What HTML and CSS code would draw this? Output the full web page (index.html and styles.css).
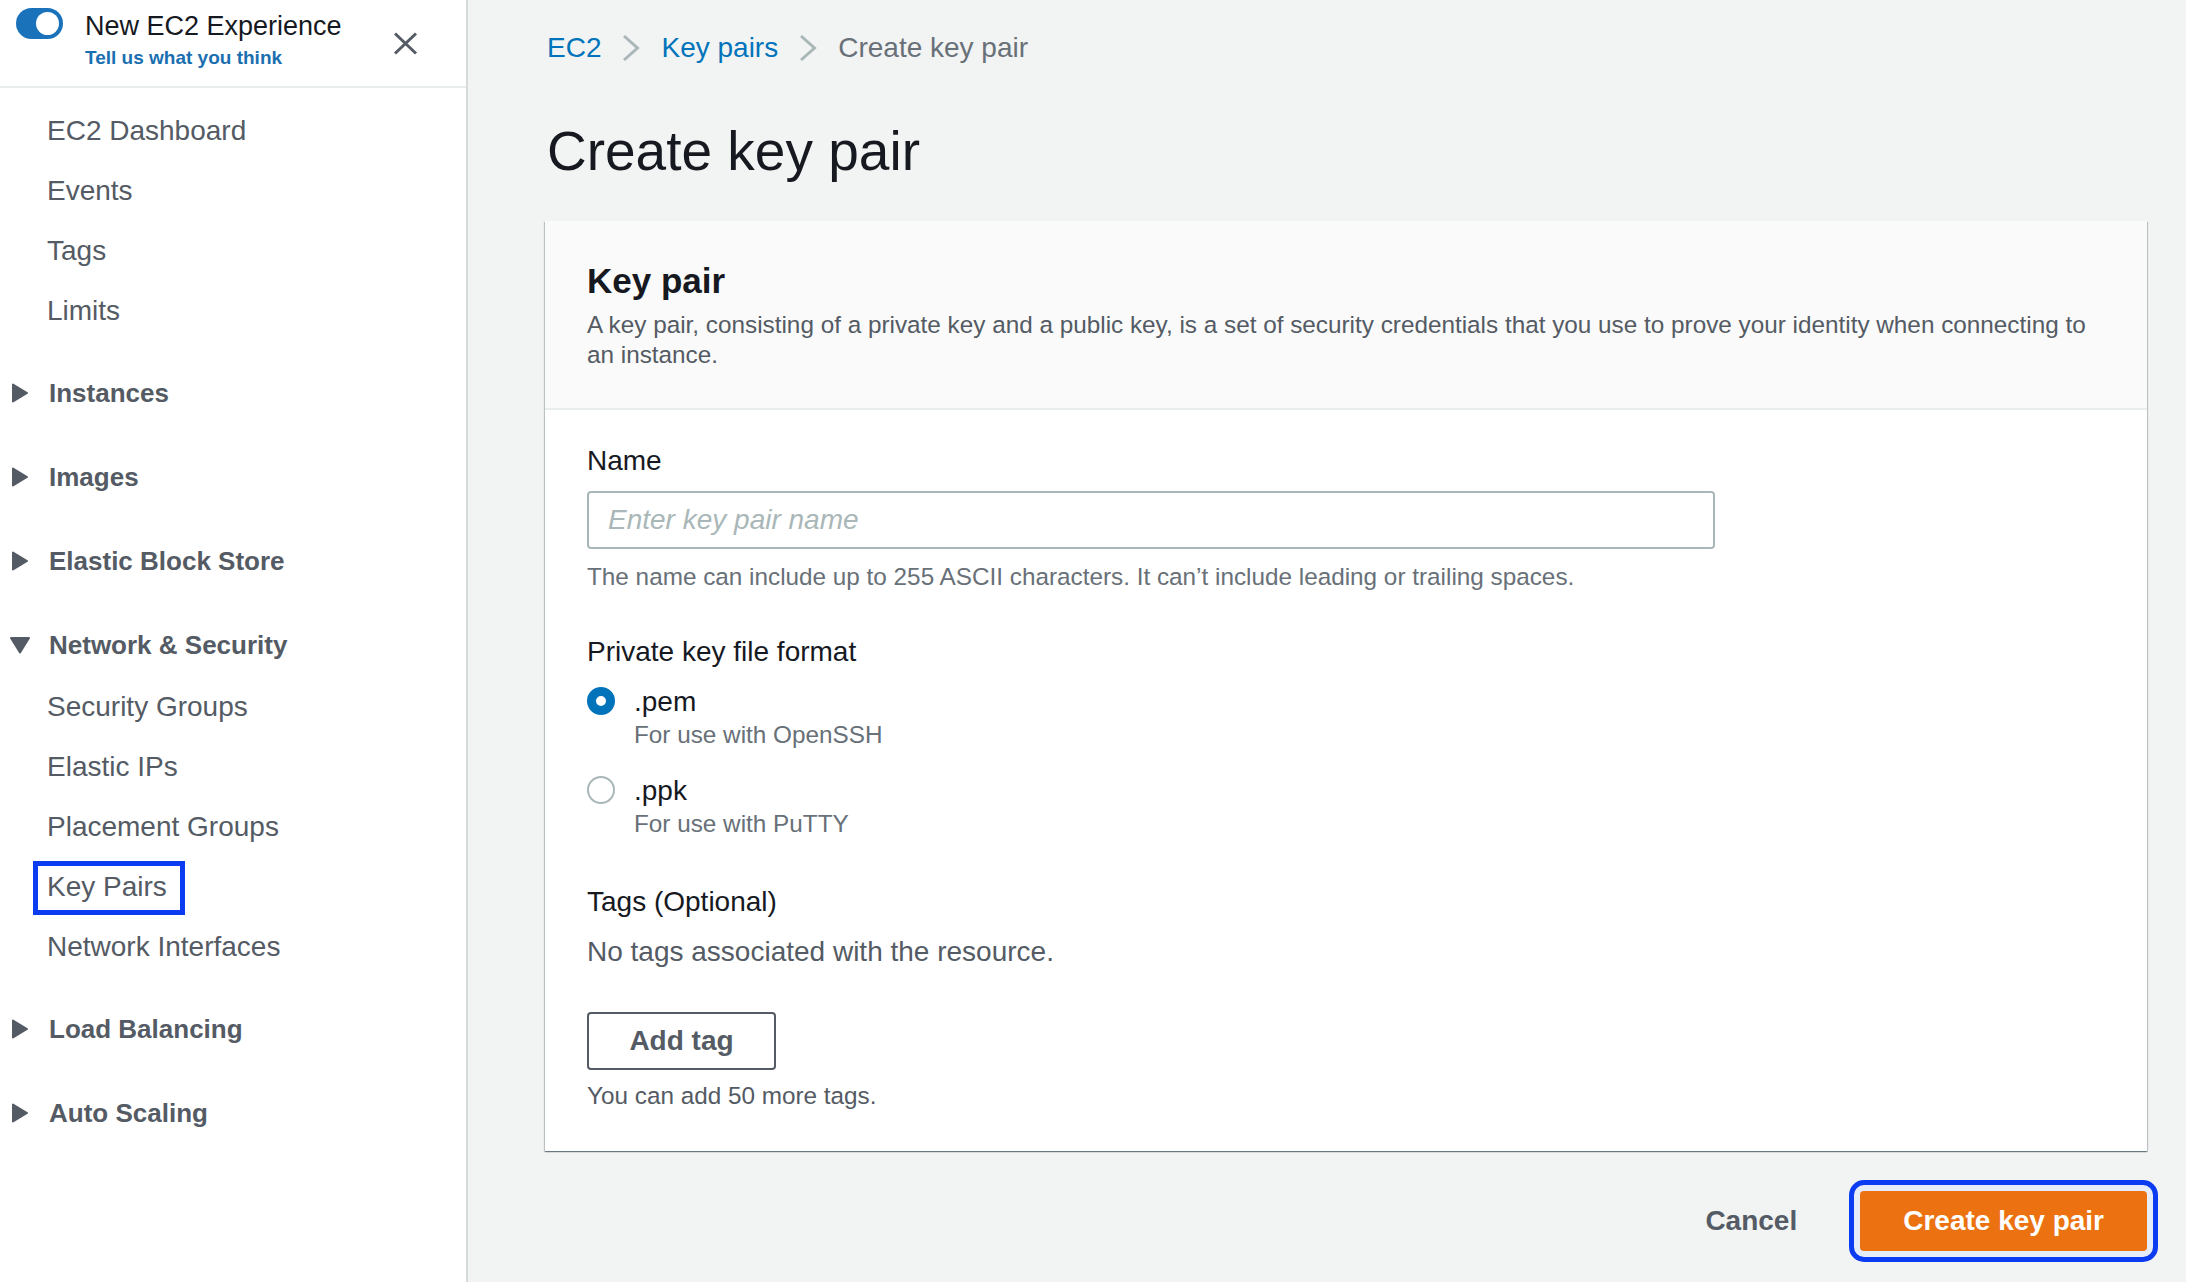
FILE: index.html
```html
<!DOCTYPE html>
<html lang="en">
<head>
<meta charset="utf-8">
<title>Create key pair | EC2 Management Console</title>
<link rel="stylesheet" href="styles.css">
</head>
<body>
<div class="app">
  <aside class="sidebar">
    <div class="side-head">
      <span class="toggle"><span class="knob"></span></span>
      <div class="side-title">
        <div class="exp">New EC2 Experience</div>
        <a class="feedback">Tell us what you think</a>
      </div>
      <svg class="close" width="25" height="23" viewBox="0 0 25 23"><path d="M2 1.5 L23 21.5 M23 1.5 L2 21.5" stroke="#545b64" stroke-width="3" fill="none"/></svg>
    </div>
    <nav class="nav">
      <a class="item">EC2 Dashboard</a>
      <a class="item">Events</a>
      <a class="item">Tags</a>
      <a class="item">Limits</a>

      <div class="sec-head"><svg class="tri" width="20" height="20" viewBox="0 0 20 20"><path d="M3 1.5 L17 10 L3 18.5 Z" fill="#545b64" stroke="#545b64" stroke-width="2" stroke-linejoin="round"/></svg>Instances</div>
      <div class="sec-head"><svg class="tri" width="20" height="20" viewBox="0 0 20 20"><path d="M3 1.5 L17 10 L3 18.5 Z" fill="#545b64" stroke="#545b64" stroke-width="2" stroke-linejoin="round"/></svg>Images</div>
      <div class="sec-head"><svg class="tri" width="20" height="20" viewBox="0 0 20 20"><path d="M3 1.5 L17 10 L3 18.5 Z" fill="#545b64" stroke="#545b64" stroke-width="2" stroke-linejoin="round"/></svg>Elastic Block Store</div>
      <div class="sec-head"><svg class="tri" width="20" height="20" viewBox="0 0 20 20"><path d="M1 3 L19 3 L10 17.5 Z" fill="#545b64" stroke="#545b64" stroke-width="2" stroke-linejoin="round"/></svg>Network &amp; Security</div>
      <div class="sub">
        <a class="item">Security Groups</a>
        <a class="item">Elastic IPs</a>
        <a class="item">Placement Groups</a>
        <a class="item"><span class="marked">Key Pairs</span></a>
        <a class="item">Network Interfaces</a>
      </div>
      <div class="sec-head"><svg class="tri" width="20" height="20" viewBox="0 0 20 20"><path d="M3 1.5 L17 10 L3 18.5 Z" fill="#545b64" stroke="#545b64" stroke-width="2" stroke-linejoin="round"/></svg>Load Balancing</div>
      <div class="sec-head"><svg class="tri" width="20" height="20" viewBox="0 0 20 20"><path d="M3 1.5 L17 10 L3 18.5 Z" fill="#545b64" stroke="#545b64" stroke-width="2" stroke-linejoin="round"/></svg>Auto Scaling</div>
    </nav>
  </aside>

  <main class="main">
    <div class="crumbs">
      <a class="crumb-link">EC2</a>
      <svg class="chev" width="18" height="28" viewBox="0 0 18 28"><path d="M2 2 L15.5 14 L2 26" stroke="#aab7b8" stroke-width="3" fill="none"/></svg>
      <a class="crumb-link">Key pairs</a>
      <svg class="chev" width="18" height="28" viewBox="0 0 18 28"><path d="M2 2 L15.5 14 L2 26" stroke="#aab7b8" stroke-width="3" fill="none"/></svg>
      <span class="crumb-cur">Create key pair</span>
    </div>
    <h1 class="title">Create key pair</h1>

    <section class="card">
      <div class="card-head">
        <h2 class="card-title">Key pair</h2>
        <p class="card-desc">A key pair, consisting of a private key and a public key, is a set of security credentials that you use to prove your identity when connecting to an instance.</p>
      </div>
      <div class="card-body">
        <div class="label">Name</div>
        <input class="text-input" type="text" placeholder="Enter key pair name">
        <div class="hint">The name can include up to 255 ASCII characters. It can’t include leading or trailing spaces.</div>

        <div class="label label-gap">Private key file format</div>
        <div class="radio radio-first">
          <span class="dot dot-on"></span>
          <div>
            <div class="radio-label">.pem</div>
            <div class="radio-desc">For use with OpenSSH</div>
          </div>
        </div>
        <div class="radio radio-second">
          <span class="dot"></span>
          <div>
            <div class="radio-label">.ppk</div>
            <div class="radio-desc">For use with PuTTY</div>
          </div>
        </div>

        <div class="label label-tags">Tags (Optional)</div>
        <div class="empty">No tags associated with the resource.</div>
        <button class="btn-outline">Add tag</button>
        <div class="hint hint-tags">You can add 50 more tags.</div>
      </div>
    </section>

    <div class="actions">
      <button class="btn-link">Cancel</button>
      <button class="btn-primary">Create key pair</button>
    </div>
  </main>
</div>
</body>
</html>
```

FILE: styles.css
```css
html, body {
  margin: 0;
  padding: 0;
}

body {
  font-family: "Liberation Sans", Arial, sans-serif;
  background: #f2f3f3;
  color: #16191f;
}

.app {
  display: flex;
  min-height: 1282px;
}

/* ---------- Sidebar ---------- */
.sidebar {
  width: 466px;
  flex: none;
  background: #ffffff;
  border-right: 2px solid #d5dbdb;
}

.side-head {
  display: flex;
  align-items: flex-start;
  padding: 10px 0 16px 16px;
  border-bottom: 2px solid #eaeded;
}

.toggle {
  flex: none;
  width: 47px;
  height: 31px;
  margin-top: -2px;
  border-radius: 16px;
  background: #1a73ba;
  display: flex;
  align-items: center;
  justify-content: flex-end;
  padding-right: 4px;
  box-sizing: border-box;
}

.knob {
  width: 23px;
  height: 23px;
  border-radius: 50%;
  background: #ffffff;
}

.side-title {
  margin-left: 22px;
}

.exp {
  font-size: 27px;
  line-height: 32px;
  color: #16191f;
}

.feedback {
  display: block;
  margin-top: 4px;
  font-size: 19px;
  line-height: 24px;
  font-weight: bold;
  color: #1a6fb0;
}

.close {
  margin-left: auto;
  margin-right: 48px;
  margin-top: 22px;
}

.nav {
  padding-top: 13px;
}

.item {
  display: block;
  padding: 12px 0 12px 47px;
  font-size: 28px;
  line-height: 36px;
  color: #545b64;
}

.sec-head {
  display: flex;
  align-items: center;
  padding: 34px 0 14px 10px;
  font-size: 26px;
  line-height: 36px;
  font-weight: bold;
  color: #545b64;
}

.tri {
  flex: none;
  margin-right: 19px;
}

.marked {
  position: relative;
}

.marked::after {
  content: "";
  position: absolute;
  left: -14px;
  right: -18px;
  top: -10px;
  bottom: -13px;
  border: 5px solid #0b3cf2;
}

/* ---------- Main ---------- */
.main {
  flex: 1;
  padding: 30px 39px 0 77px;
}

.crumbs {
  display: flex;
  align-items: center;
  padding-left: 2px;
  font-size: 28px;
  line-height: 36px;
}

.crumb-link {
  color: #0073bb;
}

.crumb-cur {
  color: #687078;
}

.chev {
  margin: 0 21px;
}

.title {
  margin: 53px 0 0;
  padding-left: 2px;
  font-size: 55px;
  line-height: 64px;
  font-weight: normal;
  color: #16191f;
}

.card {
  margin-top: 38px;
  background: #ffffff;
  box-shadow: 0 1px 1px 0 rgba(0, 28, 36, 0.35), 1px 1px 1px 0 rgba(0, 28, 36, 0.18), -1px 1px 1px 0 rgba(0, 28, 36, 0.18);
}

.card-head {
  background: #fafafa;
  padding: 38px 42px 38px 42px;
  border-bottom: 2px solid #eaeded;
}

.card-title {
  margin: 0;
  font-size: 35px;
  line-height: 44px;
  font-weight: bold;
  color: #16191f;
}

.card-desc {
  margin: 7px 0 0;
  max-width: 1518px;
  font-size: 24.3px;
  line-height: 30px;
  color: #545b64;
}

.card-body {
  padding: 33px 42px 40px 42px;
}

.label {
  font-size: 28px;
  line-height: 36px;
  color: #16191f;
}

.text-input {
  display: block;
  box-sizing: border-box;
  width: 1128px;
  height: 58px;
  margin-top: 12px;
  padding: 0 19px;
  border: 2px solid #aab7b8;
  border-radius: 4px;
  font-family: "Liberation Sans", Arial, sans-serif;
  font-size: 28px;
  color: #16191f;
  background: #ffffff;
}

.text-input::placeholder {
  color: #aab7b8;
  font-style: italic;
}

.hint {
  margin-top: 13px;
  font-size: 24.3px;
  line-height: 30px;
  color: #687078;
}

.label-gap {
  margin-top: 42px;
}

.radio {
  display: flex;
  align-items: flex-start;
}

.radio-first {
  margin-top: 14px;
}

.radio-second {
  margin-top: 23px;
}

.dot {
  flex: none;
  box-sizing: border-box;
  width: 28px;
  height: 28px;
  margin-top: 3px;
  margin-right: 19px;
  border-radius: 50%;
  border: 2px solid #aab7b8;
  background: #ffffff;
}

.dot-on {
  border: 9px solid #0073bb;
}

.radio-label {
  font-size: 28px;
  line-height: 36px;
  color: #16191f;
}

.radio-desc {
  font-size: 24.3px;
  line-height: 30px;
  color: #687078;
}

.label-tags {
  margin-top: 45px;
}

.empty {
  margin-top: 14px;
  font-size: 28px;
  line-height: 36px;
  color: #545b64;
}

.btn-outline {
  display: block;
  margin-top: 42px;
  box-sizing: border-box;
  width: 189px;
  height: 58px;
  border: 2px solid #545b64;
  border-radius: 4px;
  background: #ffffff;
  font-family: "Liberation Sans", Arial, sans-serif;
  font-size: 28px;
  font-weight: bold;
  color: #545b64;
}

.hint-tags {
  margin-top: 11px;
  color: #545b64;
}

.actions {
  display: flex;
  justify-content: flex-end;
  align-items: center;
  margin-top: 40px;
}

.btn-link {
  border: none;
  background: none;
  padding: 0;
  font-family: "Liberation Sans", Arial, sans-serif;
  font-size: 28px;
  line-height: 36px;
  font-weight: bold;
  color: #545b64;
}

.btn-primary {
  margin-left: 63px;
  box-sizing: border-box;
  height: 60px;
  padding: 0 43px;
  border: none;
  border-radius: 4px;
  background: #ec7211;
  font-family: "Liberation Sans", Arial, sans-serif;
  font-size: 28px;
  font-weight: bold;
  color: #ffffff;
  outline: 5px solid #0b3cf2;
  outline-offset: 6px;
  box-shadow: 0 0 0 6px #e6ecf8;
}
```
